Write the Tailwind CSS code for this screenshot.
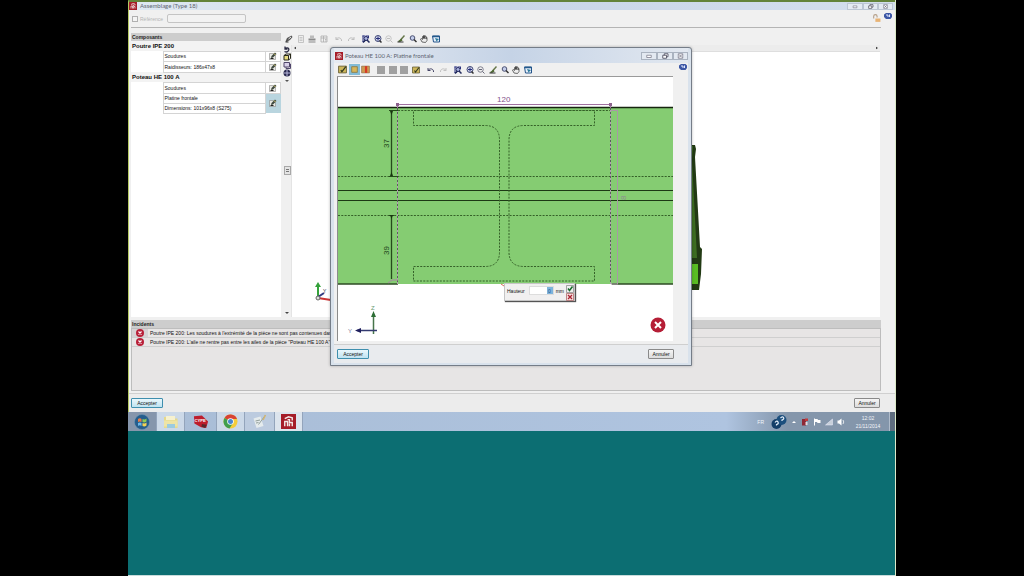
<!DOCTYPE html>
<html lang="fr">
<head>
<meta charset="utf-8">
<title>Assemblage (Type 18)</title>
<script src="https://cdn.jsdelivr.net/npm/@tailwindcss/browser@4"></script>
</head>
<body class="min-h-screen bg-black flex justify-center font-['Liberation_Sans',sans-serif] text-[5px] leading-[8px] text-[#111]">

<svg class="hidden" aria-hidden="true">
  <symbol id="logo" viewBox="0 0 16 16"><rect width="16" height="16" fill="#a51c28"/><path d="M4 13V8h3v5M7 6h2v3h3v4M9 13v-3M4 5l4-2 4 1v3" fill="none" stroke="#f3e6e6" stroke-width="1.5"/></symbol>
  <symbol id="pencil" viewBox="0 0 16 16"><path d="M1 3h12v12H1z" fill="#e9e9e4" stroke="#777"/><path d="M4 12l1-4 7-7 3 3-7 7z" fill="#3f493f"/><path d="M10 3l3 3" stroke="#e8d77c" stroke-width="2"/><path d="M3 13h6" stroke="#222" stroke-width="2"/></symbol>
  <symbol id="pen" viewBox="0 0 16 16"><path d="M1 13l3-7 9-5 2 3-5 6-7 4z" fill="#555"/><path d="M7 8l5-4" stroke="#eee" stroke-width="2"/><path d="M1 14h6" stroke="#333" stroke-width="2"/></symbol>
  <symbol id="page" viewBox="0 0 16 16"><path d="M3 1h10v14H3z" fill="#eee" stroke="#b5b5b5" stroke-width="1.5"/><path d="M5 5h6M5 8h6M5 11h6" stroke="#bbb" stroke-width="1.5"/></symbol>
  <symbol id="print" viewBox="0 0 16 16"><path d="M4 1h8v5H4z" fill="#bbb"/><path d="M1 7h14v4H1z" fill="#8a8a8a"/><path d="M1 14h14" stroke="#888" stroke-width="2"/></symbol>
  <symbol id="layout" viewBox="0 0 16 16"><path d="M2 2h12v12H2zM7 2v12M2 6h12M10 9h3M10 12h3" fill="none" stroke="#aaa" stroke-width="1.5"/></symbol>
  <symbol id="undo" viewBox="0 0 16 16"><path d="M2 4v5h5M2 9c3-5 10-4 11 1v2" fill="none" stroke="currentColor" stroke-width="2"/></symbol>
  <symbol id="redo" viewBox="0 0 16 16"><path d="M14 4v5H9M14 9C11 4 4 5 3 10v2" fill="none" stroke="currentColor" stroke-width="2"/></symbol>
  <symbol id="zoomr" viewBox="0 0 16 16"><path d="M1 2h5M2 1v12M1 13h5M7 2h7M13 2v4" stroke="#2b3280" stroke-width="2" fill="none"/><circle cx="8" cy="7" r="4" fill="#aab4df" stroke="#262a66" stroke-width="2"/><path d="M10 10l5 5M7 10l-5 5" stroke="#222b5c" stroke-width="3"/></symbol>
  <symbol id="zoomx" viewBox="0 0 16 16"><circle cx="8" cy="7" r="6" fill="#d5d9ee" stroke="#3f4775" stroke-width="2"/><path d="M8 3v8M4 7h8" stroke="#252d78" stroke-width="2"/><path d="M11 11l4 4" stroke="#333" stroke-width="3"/></symbol>
  <symbol id="zoomo" viewBox="0 0 16 16"><circle cx="7" cy="7" r="5.5" fill="#eee" stroke="currentColor" stroke-width="1.6"/><path d="M4 7h6M11 11l4 4" stroke="currentColor" stroke-width="2"/></symbol>
  <symbol id="brush" viewBox="0 0 16 16"><path d="M15 1L7 10" stroke="#65764a" stroke-width="3"/><path d="M9 7l2 4-5 3-5-1z" fill="#4f6a34"/><path d="M1 14h12" stroke="#333" stroke-width="2"/></symbol>
  <symbol id="mag" viewBox="0 0 16 16"><circle cx="7" cy="6" r="4.6" fill="#c3cdea" stroke="#4c5273" stroke-width="2"/><path d="M10 9l5 5" stroke="#333" stroke-width="3"/></symbol>
  <symbol id="hand" viewBox="0 0 16 16"><path d="M4 14L1 8l2-1 2 2V3h2v4V1h2v6l1-5h2v6l1-3h1v6l-3 4z" fill="#eee" stroke="#333" stroke-width="1.4"/></symbol>
  <symbol id="export" viewBox="0 0 16 16"><path d="M1 2h14v12H3z" fill="#e8f0fa" stroke="#24548b" stroke-width="2"/><path d="M1 3h14" stroke="#245a8c" stroke-width="3"/><path d="M6 6l8 2-5 5z" fill="#2b7b9b"/></symbol>
  <symbol id="sheet" viewBox="0 0 16 16"><path d="M1 2h14v12H1z" fill="#cdb65a" stroke="#625a30" stroke-width="1.5"/><path d="M5 9l2 3 7-9" stroke="#2f3820" stroke-width="2.2" fill="none"/></symbol>
  <symbol id="plate" viewBox="0 0 16 16"><path d="M3 3h10v10H3z" fill="#d8b65a" stroke="#8a7a45" stroke-width="1.5"/></symbol>
  <symbol id="red" viewBox="0 0 16 16"><path d="M1 2h14v12H1z" fill="#cf9a50" stroke="#82603a"/><path d="M7 2h4v12H7z" fill="#d63a26"/></symbol>
  <symbol id="grey" viewBox="0 0 16 16"><path d="M0 0h16v16H0z" fill="#a0a0a0"/></symbol>
  <symbol id="cube" viewBox="0 0 16 16"><path d="M2 5h9v9H2z" fill="#e8dc80" stroke="#29291a" stroke-width="2"/><path d="M2 5l4-3h9v9l-4 3M11 5l4-3" fill="none" stroke="#29291a" stroke-width="2"/></symbol>
  <symbol id="wire" viewBox="0 0 16 16"><path d="M2 3h11v9H2z" fill="#d8d0e8" stroke="#50466b" stroke-width="2"/><path d="M6 12v3h9V6h-2" fill="none" stroke="#50466b" stroke-width="2"/></symbol>
  <symbol id="globe" viewBox="0 0 16 16"><circle cx="8" cy="8" r="7" fill="#29294e"/><path d="M2 8h12M8 2v12" stroke="#b9b9dd" stroke-width="2"/></symbol>
  <symbol id="turn" viewBox="0 0 16 16"><path d="M4 3v5h5M4 8c5-5 9-1 7 3s-6 3-8 2" fill="none" stroke="#282840" stroke-width="2.5"/></symbol>
  <symbol id="help" viewBox="0 0 16 16"><path d="M4 2h9l3 3v5l-3 4H4l-4-4V5z" fill="#3c57a5"/><path d="M4 6h4v4M11 5v5" stroke="#dfe7ff" stroke-width="2" fill="none"/></symbol>
  <symbol id="error" viewBox="0 0 16 16"><circle cx="8" cy="8" r="8" fill="#b81f38"/><path d="M5 5l6 6M11 5l-6 6" stroke="#fff" stroke-width="2.4"/></symbol>
  <symbol id="min" viewBox="0 0 16 8"><path d="M5 3h6v3H5z" fill="#fff" stroke="#778"/></symbol>
  <symbol id="max" viewBox="0 0 16 8"><path d="M5 3h5v4H5zM7 3V1h5v4h-2" fill="#fff" stroke="#556" stroke-width="1.2"/></symbol>
  <symbol id="close" viewBox="0 0 16 8"><path d="M5 1h6v6H5z" fill="#fff" stroke="#778"/><path d="M6 2l4 4M10 2L6 6" stroke="#667"/></symbol>
</svg>

<main class="relative w-3/4 min-h-screen bg-[#0c6e72] flex flex-col border-r border-[#dbe9c8]">

  <section class="flex flex-col bg-[#f0f0f0] border-t-2 border-t-[#63833a] border-l border-l-[#b5c964]">
    <header class="h-[8px] flex items-center bg-linear-to-r from-[#dfe8f2] via-[#c9d6e8] to-[#d3deed] pr-[2px]">
      <svg class="size-[8px] mr-[3px]"><use href="#logo"/></svg>
      <h1 class="flex-1 font-['Lato',sans-serif] text-[6px] text-[#5d6470]">Assemblage (Type 18)</h1>
      <button aria-label="Réduire" class="w-[16px] h-[7px] border border-[#bcc6d4] bg-[#e4eaf2]"><svg class="w-full h-full"><use href="#min"/></svg></button>
      <button aria-label="Restaurer" class="w-[15px] h-[7px] border border-[#bcc6d4] bg-[#e4eaf2]"><svg class="w-full h-full"><use href="#max"/></svg></button>
      <button aria-label="Fermer" class="w-[15px] h-[7px] border border-[#bcc6d4] bg-[#e4eaf2]"><svg class="w-full h-full"><use href="#close"/></svg></button>
    </header>

    <div class="flex">
      <div class="flex-1 min-w-0 h-[18px] ml-[2px] flex items-center gap-[2px] border-b border-[#b4b4b4] pl-px">
        <input id="ref" type="checkbox" class="appearance-none size-[6px] border border-[#b0b0b0] bg-[#f4f4f4]">
        <label for="ref" class="w-[25px] text-[#b4b4b4]">Référence</label>
        <input type="text" aria-label="Référence" class="w-[79px] h-[9px] border border-[#c4c4c4] rounded-[2px] bg-[#f2f2f2]">
        <svg class="size-[9px] ml-auto" viewBox="0 0 16 16"><path d="M3 8V4a3 3 0 0 1 6 0v2" fill="none" stroke="#b5a08a" stroke-width="2"/><path d="M6 8h9v6H6z" fill="#e8b374"/></svg>
      </div>
      <div class="w-[14px] flex justify-center pt-[2px]"><button aria-label="Aide" class="size-[8px]"><svg class="size-[8px]"><use href="#help"/></svg></button></div>
    </div>

    <div class="flex pl-[2px] pr-[15px] pt-[5px]">
      <aside class="w-[150px] bg-white flex flex-col">
        <h2 class="bg-[#cdcdcd] h-[8px] px-px font-bold text-[#222]">Composants</h2>
        <table class="w-full border-collapse table-fixed">
          <colgroup><col class="w-[32px]"><col><col class="w-[15px]"></colgroup>
          <tbody>
            <tr class="h-[10px] bg-[#f3f3f3]"><th colspan="3" class="px-px text-left text-[6px]">Poutre IPE 200</th></tr>
            <tr class="h-[10px]"><td></td><td class="border border-[#d4d4d4] px-px">Soudures</td><td class="border border-[#d4d4d4]"><button aria-label="Modifier" class="block mx-auto size-[8px]"><svg class="size-[8px]"><use href="#pencil"/></svg></button></td></tr>
            <tr class="h-[11px]"><td></td><td class="border border-[#d4d4d4] px-px">Raidisseurs: 186x47x8</td><td class="border border-[#d4d4d4]"><button aria-label="Modifier" class="block mx-auto size-[8px]"><svg class="size-[8px]"><use href="#pencil"/></svg></button></td></tr>
            <tr class="h-[10px] bg-[#f3f3f3]"><th colspan="3" class="px-px text-left text-[6px]">Poteau HE 100 A</th></tr>
            <tr class="h-[11px]"><td></td><td class="border border-[#d4d4d4] px-px">Soudures</td><td class="border border-[#d4d4d4]"><button aria-label="Modifier" class="block mx-auto size-[8px]"><svg class="size-[8px]"><use href="#pencil"/></svg></button></td></tr>
            <tr class="h-[10px]"><td></td><td class="border border-[#d4d4d4] px-px">Platine frontale</td><td rowspan="2" class="bg-[#b9d5df]"><button aria-label="Modifier" class="block mx-auto size-[8px]"><svg class="size-[8px]"><use href="#pencil"/></svg></button></td></tr>
            <tr class="h-[10px]"><td></td><td class="border border-[#d4d4d4] px-px">Dimensions: 101x96x8 (S275)</td></tr>
          </tbody>
        </table>
      </aside>

      <div class="flex-1 min-w-0 flex flex-col pl-[2px]">
        <div class="h-[12px] flex items-center gap-[7px] pl-[2px]">
          <div class="w-[43px] flex justify-between">
            <button aria-label="Éditer" class="size-[8px]"><svg class="size-full"><use href="#pen"/></svg></button>
            <button aria-label="Page" class="size-[8px]"><svg class="size-full"><use href="#page"/></svg></button>
            <button aria-label="Imprimer" class="size-[8px]"><svg class="size-full"><use href="#print"/></svg></button>
            <button aria-label="Disposition" class="size-[8px]"><svg class="size-full"><use href="#layout"/></svg></button>
          </div>
          <div class="w-[20px] flex justify-between text-[#bdbdbd]">
            <button aria-label="Annuler" class="size-[8px]"><svg class="size-full"><use href="#undo"/></svg></button>
            <button aria-label="Rétablir" class="size-[8px]"><svg class="size-full"><use href="#redo"/></svg></button>
          </div>
          <div class="w-[78px] flex justify-between text-[#bdbdbd]">
            <button aria-label="Zoom fenêtre" class="size-[8px]"><svg class="size-full"><use href="#zoomr"/></svg></button>
            <button aria-label="Zoom étendu" class="size-[8px]"><svg class="size-full"><use href="#zoomx"/></svg></button>
            <button aria-label="Zoom arrière" class="size-[8px]"><svg class="size-full"><use href="#zoomo"/></svg></button>
            <button aria-label="Redessiner" class="size-[8px]"><svg class="size-full"><use href="#brush"/></svg></button>
            <button aria-label="Loupe" class="size-[8px]"><svg class="size-full"><use href="#mag"/></svg></button>
            <button aria-label="Déplacer" class="size-[8px]"><svg class="size-full"><use href="#hand"/></svg></button>
            <button aria-label="Exporter" class="size-[8px]"><svg class="size-full"><use href="#export"/></svg></button>
          </div>
        </div>
        <div class="flex">
          <div class="w-[9px] flex flex-col items-center bg-[#f0f0f0] border-r border-[#e4e4e4]">
            <button aria-label="Tourner" class="size-[8px]"><svg class="size-full"><use href="#turn"/></svg></button>
            <button aria-label="Solide" class="size-[8px]"><svg class="size-full"><use href="#cube"/></svg></button>
            <button aria-label="Filaire" class="size-[8px]"><svg class="size-full"><use href="#wire"/></svg></button>
            <button aria-label="Orbite" class="size-[8px]"><svg class="size-full"><use href="#globe"/></svg></button>
            <svg class="w-[4px] h-[6px]" viewBox="0 0 4 6"><path d="M0 3h4L2 5z" fill="#555"/></svg>
            <button aria-label="Curseur" class="mt-[83px] w-[7px] h-[9px] border border-[#a8a8a8] bg-[#e4e4e4] flex items-center justify-center"><span class="w-[3px] h-[3px] border-y border-[#777]"></span></button>
            <svg class="w-[4px] h-[6px] mt-auto" viewBox="0 0 4 6"><path d="M0 1h4L2 3z" fill="#444"/></svg>
          </div>
          <div class="flex-1 min-w-0 bg-white">
            <div class="h-[7px] bg-[#ececec] border-b border-[#dedede] flex justify-between items-center px-[2px]">
              <svg class="w-[2px] h-[4px]" viewBox="0 0 3 4"><path d="M3 0v4L0 2z" fill="#333"/></svg>
              <svg class="w-[2px] h-[4px]" viewBox="0 0 3 4"><path d="M0 0v4l3-2z" fill="#333"/></svg>
            </div>
            <svg class="block w-full h-[265px]" viewBox="293 52 587 265" preserveAspectRatio="xMinYMin meet">
              <path d="M319 297V285" stroke="#35a23b" stroke-width="2"/><path d="M316 287l3-5 3 5z" fill="#35a23b"/>
              <path d="M319 297l6-4" stroke="#30387e" stroke-width="2"/><path d="M319 298l13 2" stroke="#c33" stroke-width="2"/>
              <circle cx="319" cy="298" r="2" fill="#ddd" stroke="#666"/>
              <text x="324" y="293" font-size="5" fill="#223">Y</text>
              <path d="M690 145h6l1 4-1 8 5 90 2 2-1 25-2 16h-10z" fill="#223a14"/>
              <path d="M691 146h3l-1 14 5 98h-7z" fill="#3d6d22"/><path d="M691 264h8v20h-8z" fill="#59bd24"/>
            </svg>
          </div>
        </div>
      </div>
    </div>

    <section class="ml-[2px] mr-[14px] mt-[3px]">
      <h2 class="bg-[#cdcdcd] h-[8px] px-px font-bold text-[#222]">Incidents</h2>
      <ul class="h-[63px] border border-[#bdbdbd] bg-[#e7e5e5]">
        <li class="h-[9px] flex items-center border-b border-[#cfcfcf]"><span class="w-[16px] h-full flex items-center justify-center bg-[#d6d2d4]"><svg class="size-[8px]"><use href="#error"/></svg></span><span class="pl-[2px] whitespace-nowrap">Poutre IPE 200: Les soudures à l'extrémité de la pièce ne sont pas contenues dans</span></li>
        <li class="h-[9px] flex items-center border-b border-[#cfcfcf]"><span class="w-[16px] h-full flex items-center justify-center"><svg class="size-[8px]"><use href="#error"/></svg></span><span class="pl-[2px] whitespace-nowrap">Poutre IPE 200: L'aile ne rentre pas entre les ailes de la pièce "Poteau HE 100 A"</span></li>
      </ul>
    </section>

    <footer class="mt-[2px] h-[19px] flex items-center justify-between pl-[2px] pr-[15px] border-t border-[#d0d0d0] bg-[#ececec]">
      <button class="w-[32px] h-[10px] border border-[#3f8fae] rounded-[1px] bg-linear-to-b from-[#eaf7fc] to-[#bfe3f1] text-center">Accepter</button>
      <button class="w-[26px] h-[10px] border border-[#8a8a8a] rounded-[1px] bg-linear-to-b from-[#f5f5f5] to-[#dcdcdc] text-center">Annuler</button>
    </footer>
  </section>

  <nav class="h-[19px] flex items-stretch bg-linear-to-r from-[#a9bdd6] via-[#afc4e0] via-78% to-[#8496ab] to-86% text-[#f2f5fa]">
    <button aria-label="Démarrer" class="w-[28px] flex items-center justify-center bg-[#8696ac]">
      <svg class="size-[16px]" viewBox="0 0 32 32"><circle cx="16" cy="16" r="15" fill="#255d8c" stroke="#6f9ab8"/><path d="M8 10q4-3 7 0v6q-4-2-7 0z" fill="#e87a45"/><path d="M17 10q4 2 8-1v6q-4 3-8 1z" fill="#8fca55"/><path d="M8 18q4-2 7 0v6q-4-3-7 0z" fill="#6bb8ea"/><path d="M17 18q4 2 8-1v6q-4 3-8 1z" fill="#f3d253"/></svg>
    </button>
    <button aria-label="Explorateur" class="w-[29px] flex items-center justify-center bg-[#ccd9e8] border-x border-[#93a4bb]">
      <svg class="size-[16px]" viewBox="0 0 32 32"><path d="M2 6h10l3 3h14v19H2z" fill="#e6d98c"/><path d="M6 4h18v8H6z" fill="#f6f1cf"/><path d="M2 13h27v12H2z" fill="#eee4a5"/><path d="M8 20h16v8H8z" fill="#9ccbe0"/></svg>
    </button>
    <button aria-label="CYPE" class="w-[31px] flex items-center justify-center">
      <svg class="size-[16px]" viewBox="0 0 34 34"><path d="M2 5l17-2 13 13-4 14-11-2L3 20z" fill="#bd1d2c"/><path d="M19 21l10 2-3 7-8-3z" fill="#59272b"/><text x="3" y="18" font-size="9" font-weight="700" fill="#fff">CYPE</text></svg>
    </button>
    <button aria-label="Chrome" class="w-[29px] flex items-center justify-center bg-[#ccd9e8] border-x border-[#93a4bb]">
      <svg class="size-[15px]" viewBox="0 0 30 30"><circle cx="15" cy="15" r="14" fill="#f4cc3a"/><path d="M15 15L3 8a14 14 0 0 1 25 2H15z" fill="#d84334"/><path d="M15 15L3 8a14 14 0 0 0 10 21l7-11z" fill="#3f9e4e"/><circle cx="15" cy="15" r="6.5" fill="#fff"/><circle cx="15" cy="15" r="5" fill="#4a86d0"/></svg>
    </button>
    <button aria-label="Notes" class="w-[30px] flex items-center justify-center bg-[#bccbdf] border-r border-[#93a4bb]">
      <svg class="size-[15px]" viewBox="0 0 30 30"><path d="M3 9l14-4 6 19-14 4z" fill="#e5ebed"/><path d="M27 2L13 21M7 14l9-2M8 18l5-1" stroke="#93a09b" stroke-width="2"/><path d="M27 2l-5 10" stroke="#d2b673" stroke-width="3"/></svg>
    </button>
    <button aria-label="Assemblage" class="w-[28px] flex items-center justify-center bg-[#dce4ed] border-r border-[#93a4bb]"><svg class="size-[15px]"><use href="#logo"/></svg></button>
    <div class="ml-auto flex items-center gap-[4px]">
      <span class="mr-[3px]">FR</span>
      <svg class="size-[16px]" viewBox="0 0 32 32"><circle cx="11" cy="20" r="10" fill="#143e68"/><circle cx="21" cy="12" r="10" fill="#1c4f7d"/><path d="M8 17q4-5 6-1t-3 5v2M19 8q4-4 6-1t-3 5v2" fill="none" stroke="#e3edf8" stroke-width="2.4"/></svg>
      <svg class="w-[6px] h-[6px]" viewBox="0 0 6 6"><path d="M1 4h4L3 2z" fill="#fff"/></svg>
      <svg class="size-[8px]" viewBox="0 0 16 16"><path d="M2 2h8v13H2z" fill="#8d2835"/><path d="M8 1h6v5H8z" fill="#c23a3a"/><path d="M9 8h4v6H9z" fill="#e6d9dd"/></svg>
      <svg class="size-[8px]" viewBox="0 0 16 16"><path d="M3 1v14" stroke="#fff" stroke-width="2"/><path d="M4 2h5l1 2h5v6H9L8 8H4z" fill="#fff"/></svg>
      <svg class="size-[8px]" viewBox="0 0 16 16"><path d="M1 14L15 2v12z" fill="#c8d0da" stroke="#eef"/></svg>
      <svg class="size-[8px]" viewBox="0 0 16 16"><path d="M1 5h3l5-4v14l-5-4H1z" fill="#fff"/><path d="M12 4q3 4 0 8" stroke="#fff" stroke-width="1.5" fill="none"/></svg>
      <time class="w-[38px] text-center">12:02<br>21/11/2014</time>
      <span class="w-[6px] h-[19px] bg-[#5f6d7f] border-l border-[#b0bccb] -ml-[2px]"></span>
    </div>
  </nav>
  <div class="flex-1"></div>
  <div class="h-px bg-[#c9dcdc]"></div>

  <section role="dialog" aria-labelledby="dlg" class="absolute left-[202px] top-[47px] w-[362px] flex flex-col rounded-t-[3px] border border-[#757d88] bg-[#d9e2ec] px-[3px] pb-[2px] shadow-[0_0_3px_#0004]">
    <header class="h-[15px] flex items-center bg-linear-to-r from-[#e6ebf2] via-[#c5d3e6] to-[#e2e8f0]">
      <svg class="size-[8px] mr-[2px] ml-px"><use href="#logo"/></svg>
      <h2 id="dlg" class="flex-1 font-['Lato',sans-serif] text-[6px] text-[#5d6470]">Poteau HE 100 A: Platine frontale</h2>
      <button aria-label="Réduire" class="w-[16px] h-[8px] border border-[#aab3c0] bg-[#e3e9f1]"><svg class="size-full"><use href="#min"/></svg></button>
      <button aria-label="Agrandir" class="w-[16px] h-[8px] border border-[#aab3c0] bg-[#e3e9f1]"><svg class="size-full"><use href="#max"/></svg></button>
      <button aria-label="Fermer" class="w-[15px] h-[8px] border border-[#aab3c0] bg-[#e3e9f1]"><svg class="size-full"><use href="#close"/></svg></button>
    </header>
    <div class="bg-[#f0f0f0] flex flex-col">
      <div class="flex">
        <div class="flex-1 min-w-0 ml-[3px]">
          <div class="h-[14px] flex items-center gap-[7px] pl-px border-b border-[#9a9a9a]">
            <div class="w-[32px] flex justify-between items-center">
              <button aria-label="Modifier" class="size-[9px]"><svg class="size-full"><use href="#sheet"/></svg></button>
              <button aria-label="Platine" class="w-[11px] h-[11px] p-px bg-[#83bcd8]"><svg class="size-full"><use href="#plate"/></svg></button>
              <button aria-label="Raidisseur" class="size-[9px]"><svg class="size-full"><use href="#red"/></svg></button>
            </div>
            <div class="w-[43px] flex justify-between">
              <button aria-label="Option 1" class="size-[8px]"><svg class="size-full"><use href="#grey"/></svg></button>
              <button aria-label="Option 2" class="size-[8px]"><svg class="size-full"><use href="#grey"/></svg></button>
              <button aria-label="Option 3" class="size-[8px]"><svg class="size-full"><use href="#grey"/></svg></button>
              <button aria-label="Option 4" class="size-[8px]"><svg class="size-full"><use href="#sheet"/></svg></button>
            </div>
            <div class="w-[20px] flex justify-between text-[#444466]">
              <button aria-label="Annuler l'action" class="size-[8px]"><svg class="size-full"><use href="#undo"/></svg></button>
              <button aria-label="Rétablir" class="size-[8px] text-[#c2c2c2]"><svg class="size-full"><use href="#redo"/></svg></button>
            </div>
            <div class="w-[78px] flex justify-between text-[#666677]">
              <button aria-label="Zoom fenêtre" class="size-[8px]"><svg class="size-full"><use href="#zoomr"/></svg></button>
              <button aria-label="Zoom étendu" class="size-[8px]"><svg class="size-full"><use href="#zoomx"/></svg></button>
              <button aria-label="Zoom arrière" class="size-[8px]"><svg class="size-full"><use href="#zoomo"/></svg></button>
              <button aria-label="Redessiner" class="size-[8px]"><svg class="size-full"><use href="#brush"/></svg></button>
              <button aria-label="Loupe" class="size-[8px]"><svg class="size-full"><use href="#mag"/></svg></button>
              <button aria-label="Déplacer" class="size-[8px]"><svg class="size-full"><use href="#hand"/></svg></button>
              <button aria-label="Exporter" class="size-[8px]"><svg class="size-full"><use href="#export"/></svg></button>
            </div>
          </div>
          <div class="relative bg-white border-l border-[#8b8b8b]">
            <svg class="block w-full h-[264px]" viewBox="338 77 335 264" preserveAspectRatio="xMinYMin meet" font-family="Liberation Sans">
              <rect x="338" y="107" width="335" height="177" fill="#85cc72"/>
              <path d="M338 107.500H673" stroke="#16250f" stroke-width="1.500"/>
              <path d="M338 190.500H673M338 200.500H673" stroke="#1c3814" stroke-width="1.200"/>
              <path d="M338 284H398M612 284H673" stroke="#2e4b24" stroke-width="1.500"/>
              <g fill="none" stroke="#356128" stroke-dasharray="2 1.300">
                <path d="M338 176.500H673M338 215.500H673"/>
                <path d="M398 110.500H610"/>
                <path d="M414 110.500H594.500V125.500H524Q509 125.500 509 140V252Q509 266.500 524 266.500H594.500V281H413.500V266.500H485Q499.500 266.500 499.500 252V140Q499.500 125.500 485 125.500H413.500V110.500"/>
              </g>
              <path d="M397.500 108V284M610.500 108V284" stroke="#b49bb4"/>
              <path d="M397.500 108V284M610.500 108V284" stroke="#59605a" stroke-dasharray="2 2"/>
              <path d="M617.500 110V284M611 110.500H618M611 284H618" stroke="#a79aa4" fill="none"/>
              <path d="M397.500 104V108M610.500 104V108M397.500 104.500H610.500" stroke="#a071a0" fill="none"/>
              <path d="M396 103h3v3h-3zM609 103h3v3h-3z" fill="#8d628d"/>
              <text x="497" y="102" font-size="8" fill="#83508a">120</text>
              <path d="M391.500 111V176M391.500 215V279" stroke="#254a1b" stroke-width="1.300"/>
              <path d="M389 110.500H398M389 176.500H398M389 215.500H394" stroke="#254a1b"/>
              <path d="M390 111h3l-1.500 4zM390 176h3l-1.500-4zM390 215h3l-1.500 4z" fill="#18350f"/>
              <path d="M388 283l4-3h6" stroke="#a887a4" fill="none"/>
              <text transform="translate(389 148) rotate(-90)" font-size="8" fill="#23451b">37</text>
              <text transform="translate(389 255) rotate(-90)" font-size="8" fill="#23451b">39</text>
              <text transform="translate(626 200) rotate(-90)" font-size="8" fill="#8f8f90">8</text>
              <path d="M501 284l3 2" stroke="#d7675a"/>
              <path d="M373.500 334V314" stroke="#47754b" stroke-width="1.500"/><path d="M371 317l2.500-6 2.500 6z" fill="#2d6e35"/>
              <path d="M377 330.500H357" stroke="#333a70" stroke-width="1.500"/><path d="M361 328l-6 2.500 6 2.500z" fill="#20205e"/>
              <text x="371" y="310" font-size="6" fill="#6b9b72">Z</text><text x="348" y="333" font-size="6" fill="#77779b">Y</text>
              <circle cx="658" cy="325" r="7.500" fill="#b51e36"/><path d="M655 322l6 6M661 322l-6 6" stroke="#fff" stroke-width="2"/>
            </svg>
            <form class="absolute left-[166px] top-[206px] w-[71px] h-[18px] bg-[#f1f0f0] border border-[#c5c5c5] shadow-[1px_1px_1px_#555] flex pl-[2px] pt-px gap-[2px]">
              <label for="haut" class="w-[21px] pt-[2px]">Hauteur</label>
              <span class="w-[25px] h-[9px] mt-px bg-white border border-[#ddd] flex justify-end"><input id="haut" type="text" value="0" class="w-full text-right pr-[2px] bg-linear-to-r from-white from-75% to-[#7db4dc] to-75% text-[#1f4f88]"></span>
              <span class="pt-[2px]">mm</span>
              <span class="flex flex-col">
                <button type="button" aria-label="Valider" class="size-[8px]"><svg class="size-full" viewBox="0 0 16 16"><path d="M1 1h14v14H1z" fill="#eee" stroke="#888" stroke-width="1.500"/><path d="M4 7l3 4 6-8" stroke="#176b2c" stroke-width="3" fill="none"/></svg></button>
                <button type="button" aria-label="Fermer la saisie" class="size-[8px]"><svg class="size-full" viewBox="0 0 16 16"><path d="M1 1h14v14H1z" fill="#f6dede" stroke="#a66" stroke-width="1.500"/><path d="M4 4l8 8M12 4l-8 8" stroke="#a92332" stroke-width="2.500"/></svg></button>
              </span>
            </form>
          </div>
        </div>
        <div class="w-[15px] flex justify-end pr-px"><button aria-label="Aide" class="size-[8px]"><svg class="size-full"><use href="#help"/></svg></button></div>
      </div>
      <footer class="mt-[3px] h-[19px] flex items-center justify-between pl-[3px] pr-[14px] border-t border-[#cfcfcf] bg-[#e9ebee]">
        <button class="w-[32px] h-[10px] border border-[#3f8fae] rounded-[1px] bg-linear-to-b from-[#eaf7fc] to-[#bfe3f1] text-center">Accepter</button>
        <button class="w-[26px] h-[10px] border border-[#8a8a8a] rounded-[1px] bg-linear-to-b from-[#f5f5f5] to-[#dcdcdc] text-center">Annuler</button>
      </footer>
    </div>
  </section>
</main>
</body>
</html>
